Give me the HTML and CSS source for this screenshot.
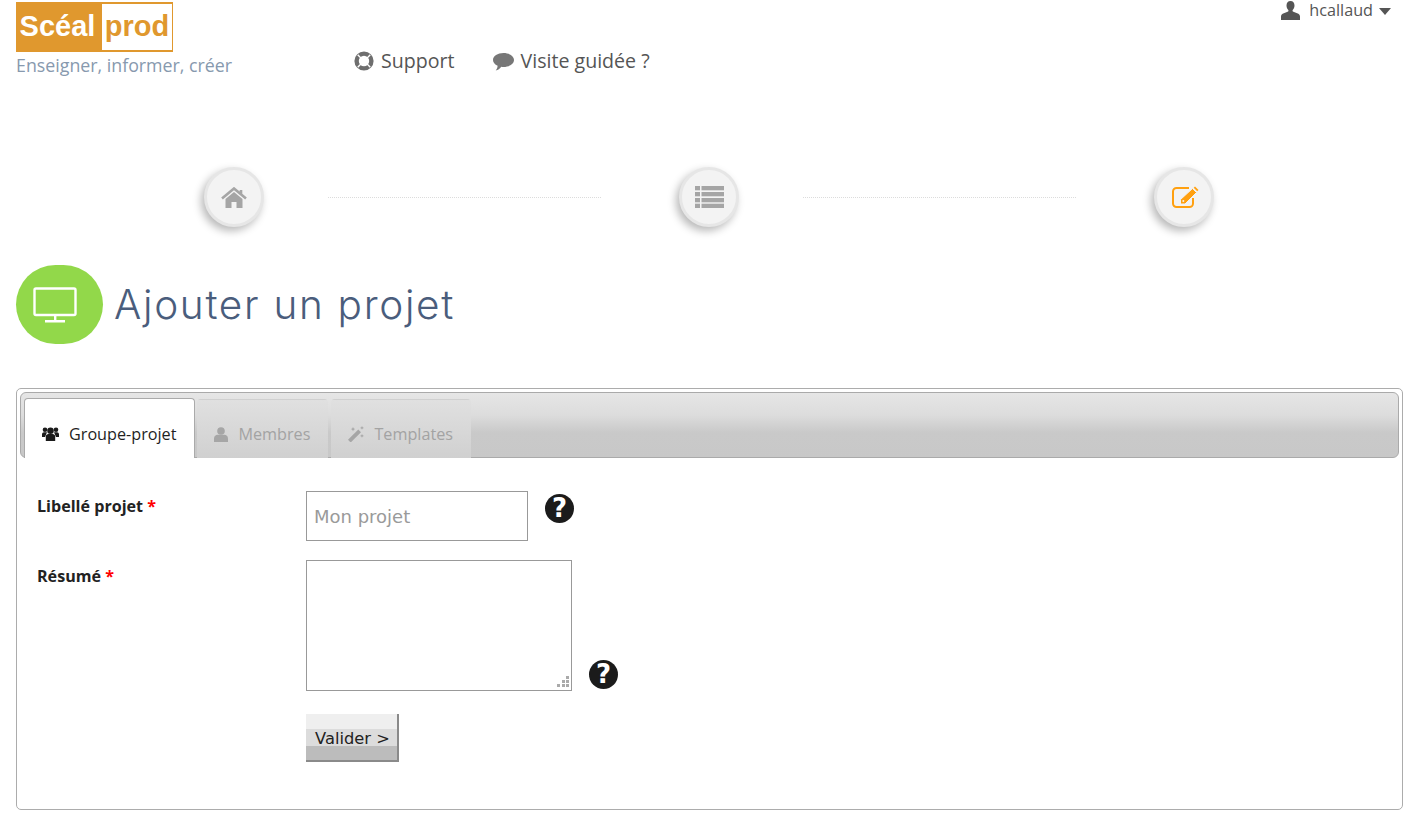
FILE: index.html
```html
<!DOCTYPE html>
<html lang="fr">
<head>
  <meta charset="UTF-8">
  <meta name="viewport" content="width=device-width, initial-scale=1.0">
  <title>Ajouter un projet</title>
  <link rel="stylesheet" href="styles.css">
</head>
<body>
  <header class="top">
    <div class="brand">
      <div class="logo"><span class="logo-left">Scéal</span><span class="logo-right">prod</span></div>
      <div class="tagline">Enseigner, informer, créer</div>
    </div>
    <nav class="top-nav">
      <a class="top-link">
        <svg class="ico-support" viewBox="0 0 20 20"><circle cx="10" cy="10" r="7.400" fill="none" stroke="#6e6e6e" stroke-width="4.400"/><path d="M3.700 3.700l3.200 3.200M16.300 3.700l-3.200 3.200M3.700 16.300l3.200-3.200M16.300 16.300l-3.200-3.200" stroke="#fff" stroke-width="1.400"/></svg>
        Support
      </a>
      <a class="top-link">
        <svg class="ico-chat" viewBox="0 0 21 18"><path d="M10.500 0C16.300 0 21 3.100 21 7s-4.700 7-10.500 7c-.8 0-1.500 0-2.200-.2C7 15.500 5 17.200 2.700 17.500c1-1.200 1.800-2.500 1.900-4.700C1.800 11.500 0 9.400 0 7 0 3.100 4.700 0 10.500 0z" fill="#777"/></svg>
        Visite guidée ?
      </a>
    </nav>
    <div class="user">
      <svg class="ico-user" viewBox="0 0 20 20"><path d="M10 0c2.700 0 4.200 2.200 4.200 4.800 0 2-.9 3.900-2.100 5l.3 1.200 4.600 1.800c1.900.8 3 1.700 3 3.400V20H0v-3.800c0-1.700 1.100-2.600 3-3.400L7.600 11l.3-1.200C6.700 8.700 5.800 6.800 5.800 4.800 5.800 2.200 7.300 0 10 0z" fill="#555"/></svg>
      <span>hcallaud</span>
      <span class="caret"></span>
    </div>
  </header>

  <div class="steps">
    <div class="step">
      <svg class="ico-home" viewBox="0 0 26 21"><path d="M1 11.500L13 1.500l12 10M20 3v4" fill="none" stroke="#a5a5a5" stroke-width="2.600"/><path d="M4.500 12L13 5l8.500 7v9H15.500v-6h-5v6H4.500z" fill="#a5a5a5"/></svg>
    </div>
    <div class="step-line"></div>
    <div class="step">
      <svg class="ico-list" viewBox="0 0 29 22"><g fill="#a5a5a5"><rect y="0" width="5" height="4.300"/><rect x="6.500" y="0" width="22.500" height="4.300"/><rect y="6" width="5" height="4.300"/><rect x="6.500" y="6" width="22.500" height="4.300"/><rect y="12" width="5" height="4.300"/><rect x="6.500" y="12" width="22.500" height="4.300"/><rect y="17.700" width="5" height="4.300"/><rect x="6.500" y="17.700" width="22.500" height="4.300"/></g></svg>
    </div>
    <div class="step-line"></div>
    <div class="step">
      <svg class="ico-edit" viewBox="0 0 27 22"><path d="M17 2H4.500A3.500 3.500 0 0 0 1 5.500v12A3.500 3.500 0 0 0 4.500 21h13a3.500 3.500 0 0 0 3.500-3.500V12" fill="none" stroke="#ffa010" stroke-width="2"/><path d="M20.500 2.500l4 4-11.500 11.500H8.500v-4.500z" fill="#ffa010" stroke="#f3f3f3" stroke-width="1"/><path d="M23 .5l3.500 3.500-1.300 1.300-3.500-3.500z" fill="#ffa010"/><circle cx="11.300" cy="15" r="1" fill="#f3f3f3"/></svg>
    </div>
  </div>

  <div class="page-title">
    <div class="title-badge">
      <svg class="ico-screen" viewBox="0 0 44 36"><rect x="1.500" y="1.500" width="41" height="26.500" rx="1.500" fill="none" stroke="#fff" stroke-width="2.400"/><path d="M21 28h2.400v5H21zM12 33h20v2.400H12z" fill="#fff"/></svg>
    </div>
    <h1>Ajouter un projet</h1>
  </div>

  <section class="panel">
    <div class="tabs">
      <a class="tab active">
        <svg class="ico-users" viewBox="0 0 17 14"><g fill="#1b1b1b"><circle cx="8.500" cy="3.800" r="3.300"/><circle cx="3" cy="2.800" r="2.300"/><circle cx="14" cy="2.800" r="2.300"/><path d="M3.800 14V9.500C3.800 8 5 7 6.500 7h4c1.500 0 2.700 1 2.700 2.500V14z"/><path d="M0 10V7.500C0 6 1 5.200 2 5.200h3L3 10zM17 10V7.500c0-1.500-1-2.300-2-2.300h-3l2 4.800z"/></g></svg>
        Groupe-projet
      </a>
      <a class="tab">
        <svg class="ico-member" viewBox="0 0 14 15"><circle cx="7" cy="4" r="3.800" fill="#a6a6a6"/><path d="M0 15v-3.500C0 9 2 7.800 3.500 7.800h7C12 7.800 14 9 14 11.500V15z" fill="#a6a6a6"/></svg>
        Membres
      </a>
      <a class="tab">
        <svg class="ico-wand" viewBox="0 0 16 16"><path d="M0 13.800L10.300 3.500 13 6.200 2.700 16.500z" fill="#a6a6a6"/><path d="M5 1l.7 1.500L7.200 3l-1.500.7L5 5.200 4.300 3.700 2.800 3l1.500-.5zM14 0l.6 1.300 1.400.6-1.400.6-.6 1.300-.6-1.300-1.400-.6 1.400-.6zM14 8l.6 1.300 1.400.6-1.400.6-.6 1.300-.6-1.300-1.400-.6 1.400-.6z" fill="#a6a6a6"/></svg>
        Templates
      </a>
    </div>

    <form class="form">
      <div class="row row-first">
        <label class="field-label">Libellé projet <span class="req">*</span></label>
        <input class="input" type="text" placeholder="Mon projet">
        <span class="help help-input">?</span>
      </div>
      <div class="row row-area">
        <label class="field-label">Résumé <span class="req">*</span></label>
        <div class="area-wrap">
          <textarea class="area"></textarea>
          <svg class="grip" viewBox="0 0 12 12"><g fill="#aaa"><rect x="9" y="0" width="3" height="3"/><rect x="5" y="4" width="3" height="3"/><rect x="9" y="4" width="3" height="3"/><rect x="0" y="8" width="3" height="3"/><rect x="5" y="8" width="3" height="3"/><rect x="9" y="8" width="3" height="3"/></g></svg>
        </div>
        <span class="help help-area">?</span>
      </div>
      <div class="row row-submit">
        <button class="btn" type="button">Valider &gt;</button>
      </div>
    </form>
  </section>
</body>
</html>
```

FILE: styles.css
```css
body {
  margin: 0;
  padding: 0 17px 0 16px;
  font-family: 'Open Sans', 'Liberation Sans', sans-serif;
  color: #1f1f1f;
  background: #fff;
}

/* en-tete */
.top {
  display: flex;
  height: 167px;
  box-sizing: border-box;
  padding-top: 2px;
}
.brand {
  width: 338px;
}
.logo {
  display: flex;
  width: 157px;
  height: 50px;
  box-sizing: border-box;
  border: 1px solid #e0982e;
  border-width: 2px 1px;
  background: #e0982e;
  font-family: 'Liberation Sans', Arial, sans-serif;
  font-weight: bold;
  font-size: 29px;
  line-height: 44px;
}
.logo-left {
  width: 81px;
  padding-right: 4px;
  text-align: center;
  color: #fff;
}
.logo-right {
  flex: 1;
  background: #fff;
  color: #e0982e;
  text-align: center;
}
.tagline {
  margin-top: 1px;
  font-size: 17.8px;
  line-height: 25px;
  color: #8799ae;
}
.top-nav {
  display: flex;
  gap: 39px;
  margin-top: 44px;
  height: 28px;
}
.top-link {
  display: flex;
  align-items: center;
  gap: 7px;
  font-size: 19.6px;
  color: #555;
}
.ico-support {
  width: 20px;
  height: 20px;
  margin-top: 1px;
}
.ico-chat {
  width: 21px;
  height: 18px;
  margin: 3px 0 0 -1px;
}
.user {
  position: absolute;
  top: 0;
  right: 29px;
  display: flex;
  align-items: center;
  font-size: 16.2px;
  line-height: 20px;
  color: #555;
}
.ico-user {
  width: 19px;
  height: 19px;
  margin-right: 9px;
}
.caret {
  width: 0;
  height: 0;
  margin: 3px 0 0 6px;
  border-left: 6.5px solid transparent;
  border-right: 6.5px solid transparent;
  border-top: 7px solid #555;
}

/* etapes */
.steps {
  display: flex;
  align-items: center;
  padding-left: 188px;
  height: 60px;
}
.step {
  display: flex;
  align-items: center;
  justify-content: center;
  width: 60px;
  height: 60px;
  box-sizing: border-box;
  border: 3px solid #e6e6e6;
  border-radius: 50%;
  background: #f3f3f3;
  box-shadow: -3px 4px 9px rgba(0, 0, 0, 0.28);
}
.step-line {
  width: 273px;
  margin: 0 78px 0 64px;
  border-top: 1px dotted #dcdcdc;
}
.ico-home {
  width: 26px;
  height: 21px;
}
.ico-list {
  width: 29px;
  height: 22px;
}
.ico-edit {
  width: 27px;
  height: 22px;
  margin-left: 2px;
}

/* titre */
.page-title {
  display: flex;
  align-items: center;
  margin-top: 38px;
  height: 79px;
}
.title-badge {
  display: flex;
  align-items: center;
  justify-content: center;
  width: 87px;
  height: 79px;
  box-sizing: border-box;
  padding-right: 9px;
  border-radius: 40px;
  background: #92d84a;
}
.ico-screen {
  width: 44px;
  height: 36px;
}
.page-title h1 {
  margin: 0 0 0 11px;
  font-family: Inter, 'Open Sans', sans-serif;
  font-size: 40.5px;
  font-weight: 300;
  letter-spacing: 1.7px;
  color: #4a5d7c;
}

/* panneau et onglets */
.panel {
  margin-top: 44px;
  height: 422px;
  box-sizing: border-box;
  padding: 3px;
  border: 1px solid #acacac;
  border-radius: 5px;
}
.tabs {
  display: flex;
  align-items: flex-end;
  gap: 3px;
  height: 66px;
  box-sizing: border-box;
  padding-left: 3px;
  border: 1px solid #aaa;
  border-radius: 6px;
  background: linear-gradient(#e6e6e6, #dcdcdc 35%, #c9c9c9 62%, #c8c8c8);
}
.tab {
  display: flex;
  align-items: center;
  gap: 10px;
  height: 59px;
  box-sizing: border-box;
  padding: 10px 17px 0 16px;
  margin-bottom: -1px;
  border: 1px solid transparent;
  border-bottom: 0;
  border-radius: 4px 4px 0 0;
  font-size: 16.2px;
  color: #a3a3a3;
  background: linear-gradient(#e0e0e0, #d0d0d0);
}
.tab.active {
  height: 60px;
  margin-right: -1px;
  border-color: #aaa;
  color: #1f1f1f;
  background: #fff;
  padding-left: 17px;
  padding-right: 18px;
}
.ico-users {
  width: 17px;
  height: 14px;
}
.ico-member {
  width: 14px;
  height: 15px;
}
.ico-wand {
  width: 16px;
  height: 16px;
}

/* formulaire */
.form {
  padding: 33px 0 0 17px;
}
.row {
  display: flex;
  align-items: flex-start;
}
.row-area {
  margin-top: 19px;
}
.row-area .field-label {
  padding-top: 4px;
}
.row-submit {
  margin-top: 23px;
  padding-left: 269px;
}
.field-label {
  width: 269px;
  padding-top: 3px;
  font-size: 16.1px;
  line-height: 24px;
  font-weight: bold;
  color: #222;
}
.req {
  color: #f00;
}
.input {
  width: 222px;
  height: 50px;
  box-sizing: border-box;
  padding: 0 7px;
  border: 1px solid #999;
  border-radius: 0;
  font-family: 'DejaVu Sans', Verdana, sans-serif;
  font-size: 18px;
}
.input::placeholder {
  color: #9a9a9a;
}
.area-wrap {
  position: relative;
  width: 266px;
  height: 131px;
}
.area {
  display: block;
  width: 100%;
  height: 100%;
  box-sizing: border-box;
  border: 1px solid #999;
  resize: none;
}
.grip {
  position: absolute;
  right: 3px;
  bottom: 3px;
  width: 12px;
  height: 12px;
}
.help {
  width: 29px;
  height: 29px;
  border-radius: 50%;
  background: #1b1b1b;
  color: #fff;
  font-family: 'DejaVu Sans', sans-serif;
  font-size: 26px;
  font-weight: bold;
  line-height: 29px;
  text-align: center;
}
.help-input {
  margin: 3px 0 0 17px;
}
.help-area {
  margin: 100px 0 0 17px;
}
.btn {
  width: 93px;
  height: 48px;
  padding: 3px 0 0 2px;
  border: 0;
  border-right: 2px solid #8a8a8a;
  border-bottom: 2px solid #8a8a8a;
  background: linear-gradient(#efefef 0, #efefef 33%, #dcdcdc 33%, #dcdcdc 69%, #bcbcbc 69%, #bcbcbc 100%);
  font-family: 'DejaVu Sans', Verdana, sans-serif;
  font-size: 16.3px;
  color: #222;
}
```
